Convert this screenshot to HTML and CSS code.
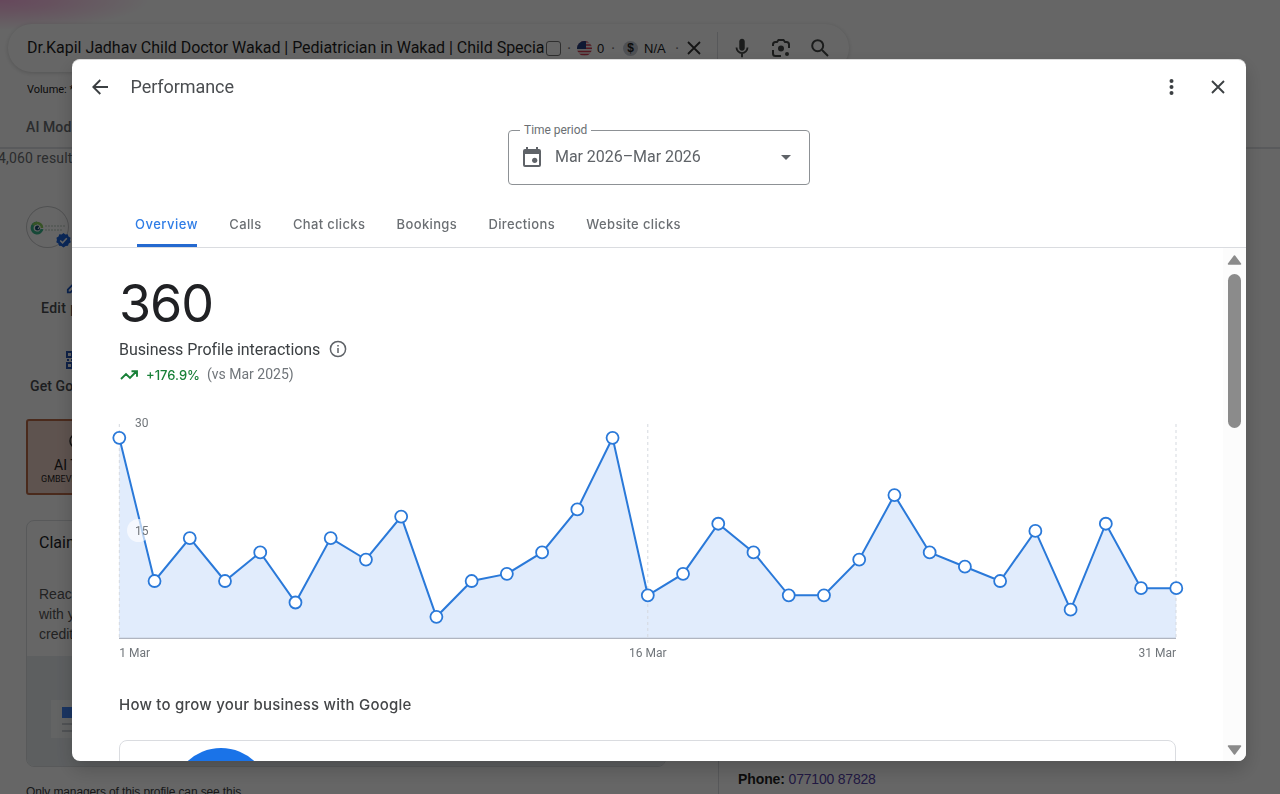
FILE: index.html
```html
<!DOCTYPE html>
<html lang="en">
<head>
<meta charset="utf-8">
<title>Performance</title>
<link rel="stylesheet" href="styles.css">
</head>
<body>
<div class="page">
  <div class="search">
    <span class="query">Dr.Kapil Jadhav Child Doctor Wakad | Pediatrician in Wakad | Child Specia</span>
    <span class="check"></span><span class="dot">·</span>
    <svg class="flag" viewBox="0 0 15 15"><defs><clipPath id="round"><circle cx="7.5" cy="7.5" r="7.5"/></clipPath></defs><g clip-path="url(#round)"><path fill="#eee" d="M0 0h15v15H0z"/><path stroke="#d33b52" stroke-width="1.5" d="M0 .8h15M0 4h15M0 7.2h15M0 10.4h15M0 13.6h15"/><path fill="#263f80" d="M0 0h9v8H0z"/></g></svg>
    <span class="stat zero">0</span><span class="dot">·</span>
    <span class="coin">$</span><span class="stat na">N/A</span><span class="dot">·</span>
    <svg class="clear" viewBox="0 0 14 14"><path d="M1 1l12 12M13 1L1 13"/></svg>
    <span class="divider"></span>
    <svg class="mic" viewBox="0 0 24 24"><path fill="#444746" d="M12 15c1.66 0 3-1.34 3-3V5c0-1.66-1.34-3-3-3S9 3.340 9 5v7c0 1.660 1.340 3 3 3z"/><path fill="none" stroke="#444746" stroke-width="2" d="M6 11.500a6 6 0 0 0 12 0M12 17.500V22"/></svg>
    <svg class="lens" viewBox="0 0 20 20"><g fill="none" stroke="#444746" stroke-width="2"><path d="M2 8V6.500A2.500 2.500 0 0 1 4.500 4H6l1.500-2h5L14 4h1.500A2.500 2.500 0 0 1 18 6.500V10M2 12v3.500A2.500 2.500 0 0 0 4.500 18H10"/></g><circle cx="10" cy="10.500" r="3" fill="#444746"/><circle cx="16" cy="16" r="2" fill="#444746"/></svg>
    <svg class="glass" viewBox="0 0 18 18"><g fill="none" stroke="#444746" stroke-width="2"><circle cx="6.700" cy="6.700" r="5.500"/><path d="M11 11l6 6"/></g></svg>
  </div>
  <div class="volume">Volume: *</div>
  <div class="modes">AI Mod</div>
  <div class="results">4,060 result</div>
  <div class="columns">
    <div class="rail">
      <div class="avatar">
        <svg class="brand" viewBox="0 0 40 16"><path d="M8 3a5 5 0 1 0 5 6" fill="none" stroke="#38b58a" stroke-width="3"/><path d="M4 5a5 5 0 0 1 9 3" fill="none" stroke="#8bcf5f" stroke-width="2.500"/><circle cx="8.500" cy="8" r="2.500" fill="#164b72"/><path d="M9 9l2-3" stroke="#fff" stroke-width="1.200"/><path d="M16 6h21M16 10h18" stroke="#b5c8bc" stroke-width="1.200" stroke-dasharray="2 1"/></svg>
        <svg class="verified" viewBox="0 0 16 16"><path fill="#1a63dc" d="M8 0l2 1.500 2.500-.2.800 2.400L15.500 5 15 7.500l.8 2.300-2.200 1.500-.8 2.400-2.500.1L8 15.500l-2.200-1.700-2.600-.1-.7-2.400L.3 9.800 1 7.500.5 5l2.200-1.300.8-2.400 2.500.2z"/><path fill="none" stroke="#fff" stroke-width="1.700" d="M4.500 8l2.500 2.400 4.500-4.800"/></svg>
      </div>
      <svg class="pencil" viewBox="0 0 20 20"><path fill="none" stroke="#1a56c4" stroke-width="2" d="M2 14L14 2l3 3L5 17H2z"/></svg>
      <div class="action edit">Edit p</div>
      <svg class="qr" viewBox="0 0 20 20"><path fill="none" stroke="#2856b4" stroke-width="2" d="M2 2h5v5H2zM2 13h5v5H2zM12 2h6v5h-6zM2 10h2M6 10h6"/></svg>
      <div class="action get">Get Go</div>
      <div class="tool"><svg class="ring" viewBox="0 0 16 16"><circle cx="8" cy="8" r="7"/></svg><span class="tool-name">AI T</span><span class="tool-sub">GMBEVE</span></div>
      <div class="card">
        <div class="card-title">Clain</div>
        <div class="card-text">Reac<br>with y<br>credit</div>
        <div class="art"><div class="sheet"><span class="block"></span><span class="line"></span><span class="line"></span></div></div>
      </div>
      <div class="note">Only managers of this profile can see this</div>
    </div>
    <div class="details"><b>Phone:</b> <span class="phone">077100 87828</span></div>
  </div>
</div>

<div class="scrim">
  <section class="dialog">
    <header class="bar">
      <svg class="back" viewBox="0 0 16 16"><path d="M16 8H1.500M8.300 1L1.300 8l7 7"/></svg>
      <h1 class="title">Performance</h1>
      <svg class="more" viewBox="0 0 4 16"><circle cx="2" cy="2" r="2"/><circle cx="2" cy="8" r="2"/><circle cx="2" cy="14" r="2"/></svg>
      <svg class="close" viewBox="0 0 14 14"><path d="M1 1l12 12M13 1L1 13"/></svg>
    </header>
    <div class="period">
      <span class="legend">Time period</span>
      <svg class="calendar" viewBox="0 0 18 20"><path fill="#5f6368" fill-rule="evenodd" d="M3 0h2v2h8V0h2v2h1a2 2 0 0 1 2 2v14a2 2 0 0 1-2 2H2a2 2 0 0 1-2-2V4a2 2 0 0 1 2-2h1zM2 7v11h14V7z"/><circle cx="11.700" cy="13.300" r="2.600" fill="#5f6368"/></svg>
      <span class="range">Mar 2026–Mar 2026</span>
      <svg class="caret" viewBox="0 0 10 5"><path fill="#5f6368" d="M0 0h10L5 5z"/></svg>
    </div>
    <nav class="tabs">
      <span class="tab active">Overview</span><span class="tab">Calls</span><span class="tab">Chat clicks</span><span class="tab">Bookings</span><span class="tab">Directions</span><span class="tab">Website clicks</span>
    </nav>
    <div class="body">
      <main class="content">
        <div class="total">360</div>
        <div class="metric">Business Profile interactions
          <svg class="info" viewBox="0 0 18 18"><circle cx="9" cy="9" r="7.600" fill="none" stroke="#5f6368" stroke-width="1.500"/><path stroke="#5f6368" stroke-width="1.500" d="M9 8v5M9 5v1.600"/></svg>
        </div>
        <div class="trend">
          <svg class="up" viewBox="0 0 18 10"><path fill="none" stroke="#188038" stroke-width="1.900" d="M1 9l5-5 4 4 6.300-6.500M11.500 1.200H17v5.500"/></svg>
          <span class="gain">+176.9%</span><span class="versus">(vs Mar 2025)</span>
        </div>
        <svg class="chart" id="chart" viewBox="0 0 1074 260"></svg>
        <h2 class="grow">How to grow your business with Google</h2>
        <div class="tip"><div class="disc"></div></div>
      </main>
      <div class="scrollbar">
        <svg class="arrow" viewBox="0 0 14 10"><path d="M7 1L13 9H1z"/></svg>
        <div class="thumb"></div>
        <svg class="arrow" viewBox="0 0 14 10"><path d="M7 9L13 1H1z"/></svg>
      </div>
    </div>
  </section>
</div>
<script src="chart.js"></script>
</body>
</html>
```
FILE: styles.css
```css
* { box-sizing: border-box; }
body { margin: 0; width: 1280px; height: 794px; overflow: hidden; font-family: Roboto, "Liberation Sans", sans-serif; color: #1f1f1f; }
svg { display: block; flex: none; }
.page { height: 794px; overflow: hidden; padding-top: 24px; background: radial-gradient(ellipse 150px 30px at 0 0, #ffb4e6 0, #ffcaeb 35%, rgba(255,225,245,0) 100%) #fff; }
.search { width: 841px; height: 48px; margin-left: 8px; padding-left: 19px; border-radius: 24px; background: #fff; box-shadow: 0 1px 4px rgba(32,33,36,.2); display: flex; align-items: center; white-space: nowrap; }
.query { width: 519px; font-size: 16px; flex: none; letter-spacing: -.03px; margin-top: -1px; }
.check { width: 15px; height: 15px; border: 1px solid #777; border-radius: 3px; flex: none; }
.dot { width: 16px; text-align: center; color: #777; flex: none; }
.flag { width: 15px; height: 15px; }
.stat { font: 13px "Liberation Sans", sans-serif; color: #202124; }
.zero { margin: 0 0 0 5px; width: 8px; }
.coin { width: 15px; height: 15px; border-radius: 50%; background: #c4c9d2; font: bold 12px/15px "Liberation Sans", sans-serif; text-align: center; margin-left: 2px; }
.na { width: 25px; margin-left: 6px; }
.clear { width: 14px; height: 14px; margin-left: 2px; fill: none; stroke: #333; stroke-width: 1.8; }
.divider { width: 1px; height: 32px; background: #dadce0; margin-left: 16px; }
.mic { width: 22px; height: 22px; margin-left: 13px; }
.lens { width: 20px; height: 20px; margin-left: 18px; }
.glass { width: 18px; height: 18px; margin-left: 20px; }
.volume { height: 34px; line-height: 35px; padding-left: 27px; font-size: 11px; color: #222; letter-spacing: -.03px; }
.modes { height: 43px; line-height: 42px; padding-left: 26px; font-size: 14px; font-weight: 500; color: #6b6f73; border-bottom: 2px solid #dfe1e5; letter-spacing: .1px; }
.results { height: 20px; line-height: 19px; margin-left: -2px; font-size: 14px; color: #6b6f73; letter-spacing: .15px; }
.columns { display: grid; grid-template-columns: 718px 1fr; height: 640px; }
.rail { padding: 37px 0 0 26px; }
.avatar { position: relative; width: 43px; height: 42px; border: 1px solid #c8cacc; border-radius: 50%; padding: 13px 0 0 2px; }
.brand { width: 40px; height: 16px; }
.verified { position: absolute; left: 29px; top: 26px; width: 15px; height: 15px; }
.pencil { width: 18px; height: 18px; margin: 29px 0 0 40px; }
.action { height: 20px; line-height: 20px; font-size: 14px; font-weight: 500; color: #4a4d50; }
.edit { margin: 3px 0 0 15px; letter-spacing: .35px; }
.qr { width: 20px; height: 20px; margin: 32px 0 0 39px; }
.get { margin: 6px 0 0 4px; letter-spacing: .1px; }
.tool { width: 110px; height: 76px; margin-top: 23px; padding-top: 12px; border: 2px solid #b96a48; border-radius: 3px; background: #ecd0c6; display: flex; flex-direction: column; }
.ring { width: 16px; height: 16px; margin-left: 41px; fill: none; stroke: #333; stroke-width: 1.5; }
.tool-name { margin: 8px 0 0 26px; font-size: 14px; line-height: 17px; }
.tool-sub { margin: 0 0 0 13px; font-size: 9px; line-height: 10px; }
.card { width: 640px; height: 247px; margin-top: 25px; border: 1px solid #dcdfe2; border-radius: 8px; overflow: hidden; color: #555; }
.card-title { margin: 11px 0 0 12px; font-size: 16px; line-height: 21px; color: #202124; }
.card-text { margin: 31px 0 0 12px; height: 72px; font: 14px/20px "Liberation Sans", sans-serif; }
.art { height: 112px; background: #e9eef1; padding: 44px 0 0 24px; }
.sheet { width: 100px; height: 38px; background: #f7f9fa; padding: 7px 0 0 11px; display: flex; flex-direction: column; }
.block { width: 40px; height: 11px; background: #4285f4; }
.line { width: 40px; height: 2px; background: #c8ced4; margin-top: 5px; }
.note { margin-top: 17px; font: 12px/16px "Liberation Sans", sans-serif; color: #3c4043; letter-spacing: -.12px; }
.details { border-left: 1px solid #dadce0; padding: 600px 0 0 19px; font: 14px/20px "Liberation Sans", sans-serif; letter-spacing: -.2px; }
.details b { letter-spacing: -.1px; }
.phone { color: #5540a8; }

.scrim { position: fixed; inset: 0; background: rgba(0,0,0,.6); }
.dialog { position: absolute; left: 72px; top: 59px; width: 1174px; height: 702px; border-radius: 8px; background: #fff; overflow: hidden; border-top: 1px solid #ddd; display: flex; flex-direction: column; box-shadow: 0 8px 20px rgba(0,0,0,.2); }
.bar { height: 56px; flex: none; display: flex; align-items: center; padding: 0 21px 2px 20px; }
.back { width: 16px; height: 16px; fill: none; stroke: #3c4043; stroke-width: 1.9; }
.title { margin: -2px auto 0 22.5px; font-size: 18px; font-weight: 400; color: #4a4d50; letter-spacing: -.07px; }
.more { width: 5px; height: 16px; fill: #3c4043; }
.close { width: 14px; height: 14px; margin-left: 37px; fill: none; stroke: #3c4043; stroke-width: 1.9; }
.period { position: relative; width: 302px; height: 55px; flex: none; margin: 14px 0 0 436px; border: 1px solid #8d9195; border-radius: 4px; display: flex; align-items: center; padding: 0 18px 0 14px; }
.legend { position: absolute; left: 11px; top: -9px; padding: 0 4px; background: #fff; color: #6b6f73; font-size: 12px; line-height: 16px; letter-spacing: -.03px; }
.calendar { width: 18px; height: 20px; margin-bottom: 1px; }
.range { font-size: 16px; color: #5f6368; margin: 0 auto 2px 14px; letter-spacing: -.05px; }
.caret { width: 10px; height: 5px; }
.tabs { height: 63px; flex: none; border-bottom: 1px solid #dadce0; display: flex; align-items: flex-end; padding-left: 63px; gap: 31.3px; font: 500 13px/20px Inter, sans-serif; letter-spacing: .36px; color: #6b6f73; white-space: nowrap; }
.tab { height: 33px; }
.active { letter-spacing: .5px; color: #2f7de6; background: linear-gradient(#2469d0, #2469d0) center bottom / 60px 3px no-repeat; }
.body { flex: 1; min-height: 0; display: flex; overflow: hidden; }
.content { width: 1151px; padding: 24px 0 0 47px; flex: none; }
.total { font: 400 52px/64px Inter, sans-serif; letter-spacing: -1px; color: #202124; }
.metric { display: flex; align-items: center; height: 20px; margin-top: 3px; gap: 9px; font-size: 16px; color: #3c4043; letter-spacing: -.06px; }
.info { width: 18px; height: 18px; }
.trend { display: flex; align-items: center; height: 20px; margin-top: 5px; font-size: 14px; }
.up { width: 18px; height: 10px; margin: 2px 0 0 1px; }
.gain { color: #188038; font-family: Inter, sans-serif; font-weight: 500; font-size: 13px; margin: 2px 0 0 8px; }
.versus { color: #70757a; margin-left: 7px; }
.chart { width: 1074px; height: 260px; margin: 25px 0 0 -8px; }
.axis { font-size: 12px; fill: #70757a; }
.grow { margin: 25.5px 0 0; font: 500 15px/20px Inter, sans-serif; color: #444648; letter-spacing: .22px; }
.tip { width: 1057px; height: 120px; margin-top: 25.5px; border: 1px solid #dadce0; border-radius: 8px; padding: 7px 0 0 52px; }
.disc { width: 98px; height: 98px; border-radius: 50%; background: #1a73e8; }
.scrollbar { width: 23px; background: #fcfcfc; padding: 7px 0 6px 4px; display: flex; flex-direction: column; }
.arrow { width: 15px; height: 10px; fill: #8b8b8b; stroke: #8b8b8b; stroke-width: 1.500; stroke-linejoin: round; }
.thumb { width: 13px; height: 154px; border-radius: 7px; background: #8b8b8b; margin: 9px 0 auto 1px; }
```
FILE: chart.js
```javascript
const values = [28,8,14,8,12,5,14,11,17,3,8,9,12,18,28,6,9,16,12,6,6,11,20,12,10,8,15,4,16,7,7];
const base = 229.3, step = 1057 / 30, unit = 7.16;
const pts = values.map((v, i) => [8.3 + i * step, base - v * unit]);
const line = pts.map(p => p.map(n => n.toFixed(1)).join(',')).join(' ');
const mid = 8.3 + 15 * step;
document.getElementById('chart').innerHTML = `
<polygon points="8,${base} ${line} 1065,${base}" fill="#e1ecfc"/>
<path d="M8.3 15V229M${mid} 15V229M1065 15V229" stroke="#d5d9df" stroke-dasharray="3 3"/>
<path d="M8 ${base}H1065" stroke="#b0b5c0" stroke-width="1.300"/>
<polyline points="${line}" fill="none" stroke="#2a79d9" stroke-width="2"/>
${pts.map(p => `<circle cx="${p[0]}" cy="${p[1]}" r="6" fill="#fff" stroke="#2a79d9" stroke-width="1.8"/>`).join('')}
<circle cx="27.500" cy="121.500" r="11.500" fill="#fff" opacity=".65"/>
<text class="axis" x="24" y="18">30</text><text class="axis" x="24" y="125.500">15</text>
<text class="axis" x="8.300" y="248">1 Mar</text><text class="axis" x="${mid}" y="248" text-anchor="middle">16 Mar</text><text class="axis" x="1065" y="248" text-anchor="end">31 Mar</text>`;
```
